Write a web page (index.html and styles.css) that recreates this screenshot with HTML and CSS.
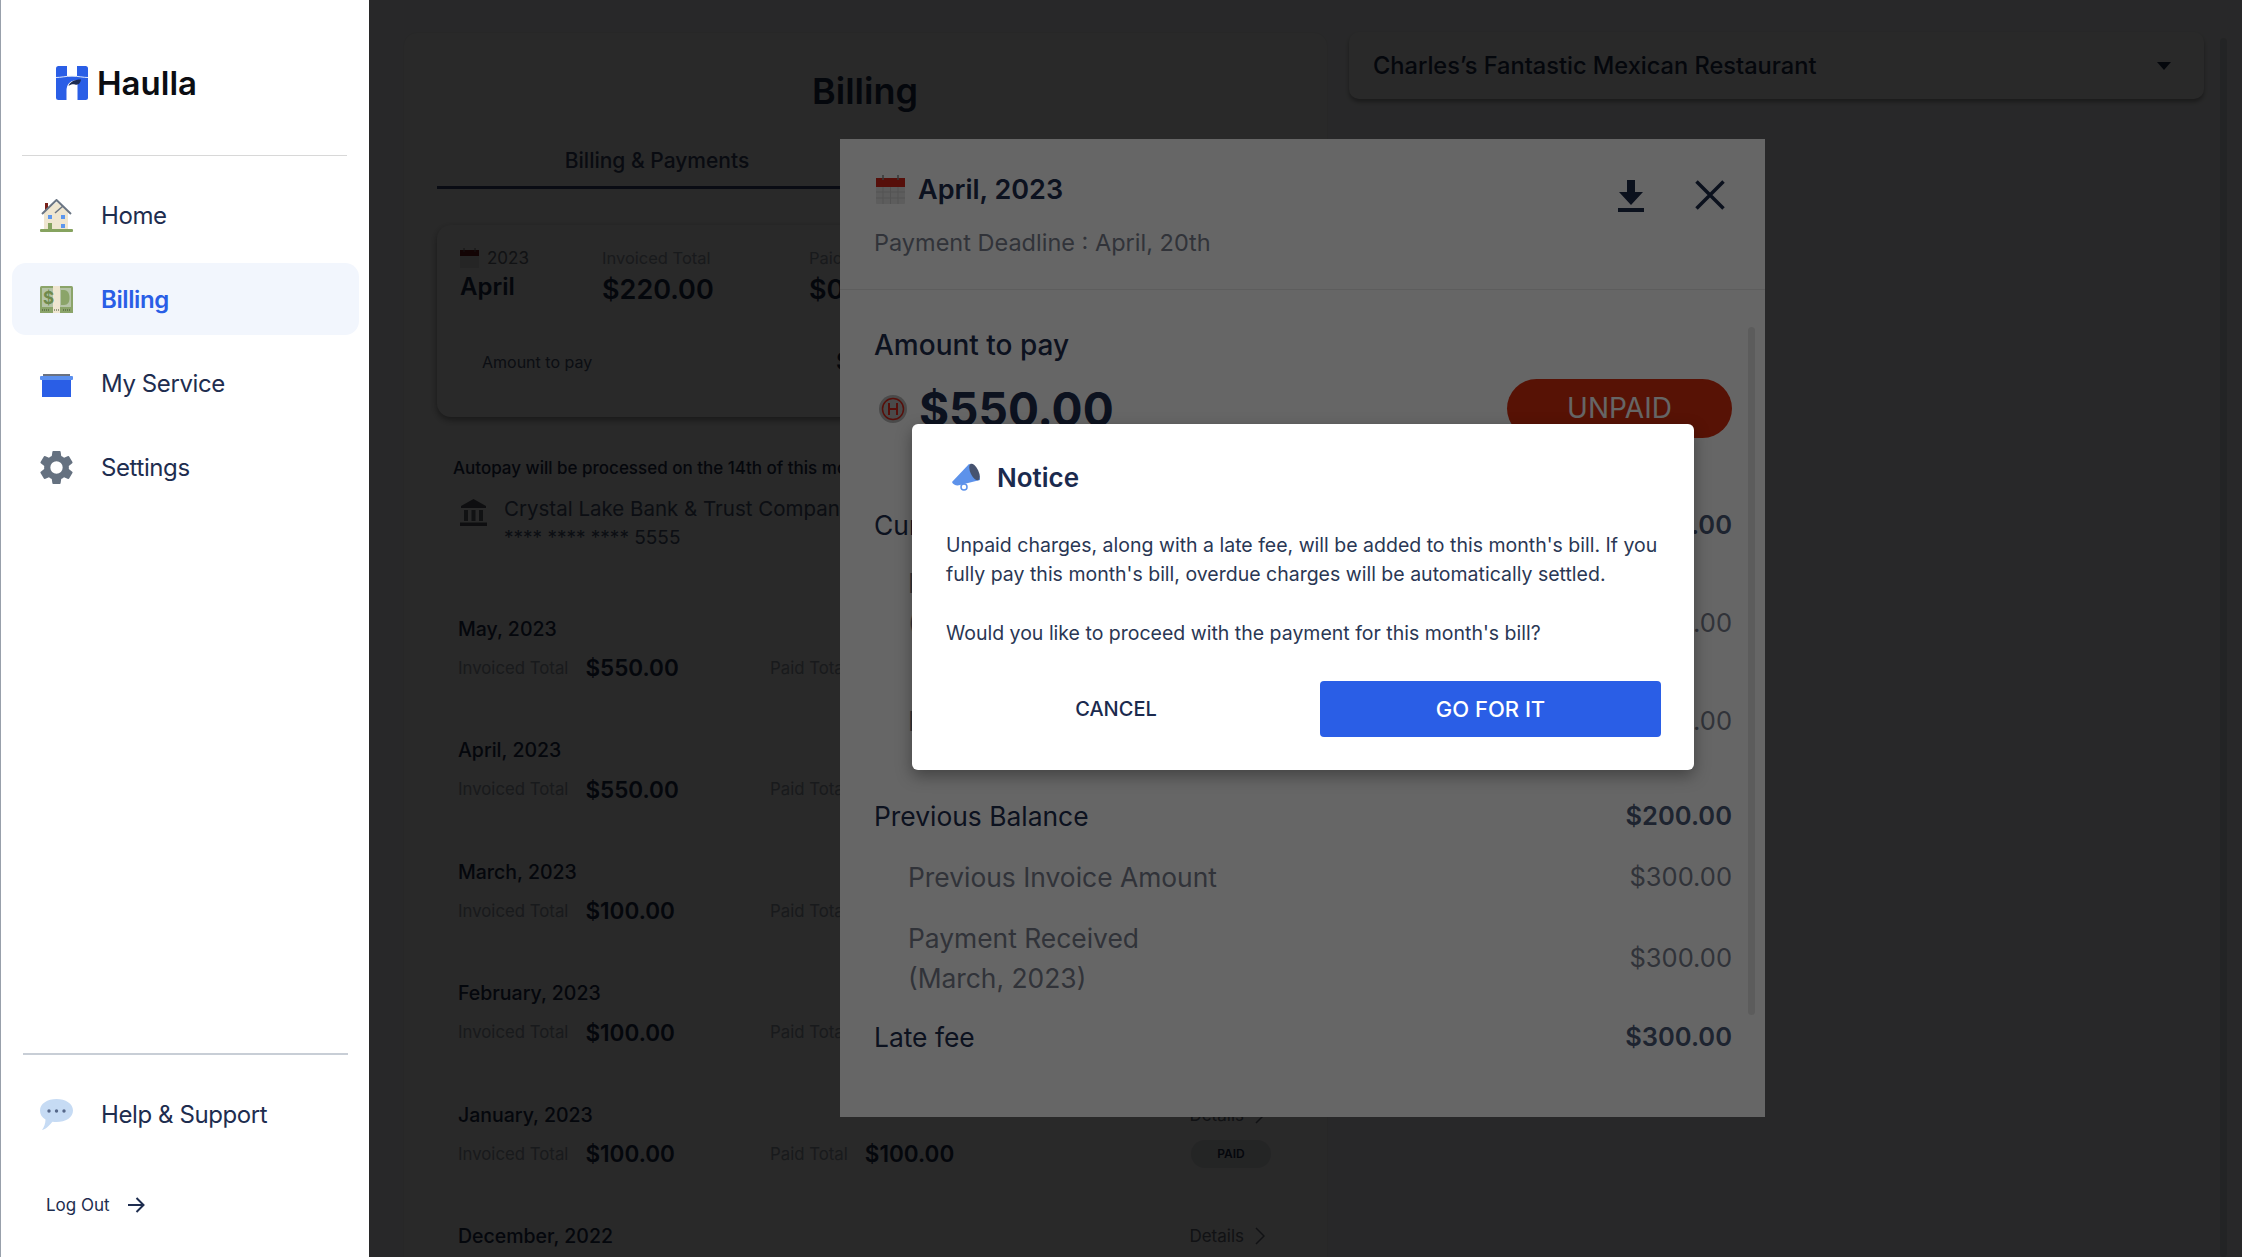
FILE: index.html
```html
<!DOCTYPE html>
<html lang="en">
<head>
<meta charset="utf-8">
<title>Haulla Billing</title>
<link rel="stylesheet" href="styles.css">
</head>
<body>
<div class="app">
  <aside class="sidebar">
    <div class="brand">
      <svg class="brand-mark" viewBox="0 0 32 34"><rect width="32" height="34" rx="2.5" fill="#2a5ee6"/><rect x="11" y="-1" width="10" height="11" fill="#fff"/><path d="M0 11.5C5 11.5 9 10.2 16 10.2S27 11.5 32 11.5" fill="none" stroke="#dfe8fb" stroke-width="1"/><path d="M10.5 35V24C10.5 19 14 14.5 19 14.5C20.5 14.5 21.500 15 21.500 16V35Z" fill="#fff"/><path d="M12.500 20C14 16 18 13.500 25 13.500C24.500 17 22.500 19.500 19 18.500C16.500 18 14.500 18.500 12.500 20Z" fill="#1c2b52"/></svg>
      <span class="brand-name">Haulla</span>
    </div>
    <hr class="rule rule-top">
    <nav class="nav">
      <a class="nav-item">
        <svg class="nav-icon" viewBox="0 0 33 33"><rect x="5" y="4" width="3" height="8" fill="#7a2018"/><path d="M4 13 17 3 28 13V31H4Z" fill="#efe6d0"/><path d="M2 15 16.500 1 31 15" fill="none" stroke="#6b7684" stroke-width="2"/><path d="M15 14 23 7" fill="none" stroke="#6b7684" stroke-width="1.500"/><rect x="8" y="16" width="4" height="4" fill="#5d97ee"/><rect x="21" y="16" width="4" height="4" fill="#5d97ee"/><rect x="21" y="25" width="4" height="4" fill="#5d97ee"/><rect x="8" y="24" width="4" height="7" fill="#86a35f"/><rect y="30" width="33" height="3" rx="1" fill="#86a35f"/></svg>
        <span>Home</span>
      </a>
      <a class="nav-item is-active">
        <svg class="nav-icon" viewBox="0 -3 33 33"><rect y="0" width="33" height="27" rx="1.500" fill="#8ba469"/><rect x="2" y="2" width="29" height="19" fill="#b6c4a7"/><rect y="21" width="33" height="6" fill="#8ba469"/><path d="M21 4H24C28 4 29.500 8 29.500 12S28 19 24 19H21Z" fill="#8ba469"/><rect x="13" y="0" width="7" height="27" fill="#efe6d0"/><text class="nav-dollar" x="3" y="18">$</text><path d="M2 24H10M23 24H31M14 24H19" stroke="#3f4c33" stroke-width="1" stroke-dasharray="1 1"/></svg>
        <span>Billing</span>
      </a>
      <a class="nav-item">
        <svg class="nav-icon" viewBox="0 -7 33 33"><rect x="3" y="0" width="27" height="3" fill="#6b7280"/><rect y="2" width="33" height="4" rx="1" fill="#5b8fee"/><rect x="2" y="6" width="29" height="17" fill="#2a5ee6"/></svg>
        <span>My Service</span>
      </a>
      <a class="nav-item">
        <svg class="nav-icon" viewBox="2.400 2.400 19.200 19.200"><path fill="#657180" d="M19.140 12.940c.040-.300.060-.610.060-.940s-.020-.640-.070-.940l2.030-1.580a.49.49 0 0 0 .120-.610l-1.920-3.320a.49.49 0 0 0-.590-.220l-2.390.960a7 7 0 0 0-1.620-.940l-.360-2.540a.48.480 0 0 0-.480-.410h-3.840a.47.470 0 0 0-.470.410l-.360 2.540c-.590.240-1.130.570-1.620.940l-2.390-.960a.49.49 0 0 0-.590.220L2.740 8.870a.47.470 0 0 0 .120.610l2.030 1.580c-.050.300-.090.630-.090.940s.020.640.070.940l-2.030 1.580a.49.49 0 0 0-.120.610l1.920 3.320c.120.220.370.290.590.220l2.390-.960c.500.380 1.030.700 1.620.940l.360 2.540c.050.240.240.410.480.410h3.840c.240 0 .440-.170.470-.410l.360-2.540c.590-.240 1.130-.560 1.620-.940l2.390.960c.220.080.470 0 .590-.220l1.920-3.320a.47.470 0 0 0-.120-.610zM12 15.600a3.600 3.600 0 1 1 0-7.200 3.600 3.600 0 0 1 0 7.200z"/></svg>
        <span>Settings</span>
      </a>
    </nav>
    <div class="side-foot">
      <hr class="rule rule-bottom">
      <a class="nav-item help">
        <svg class="nav-icon" viewBox="0 0 33 33"><path d="M16.500 1C25.500 1 33 5.500 33 12.500S25.500 24 16.500 24C15 24 14 24 12.500 23.800C10 26.500 6.500 31 2 32C4 29 5.500 26 5.500 21.500C2 19.500 0 16.500 0 12.500C0 5.500 7.500 1 16.500 1Z" fill="#c6dbf4"/><circle cx="9" cy="13" r="1.700" fill="#56688a"/><circle cx="16.500" cy="13" r="1.700" fill="#56688a"/><circle cx="24" cy="13" r="1.700" fill="#56688a"/></svg>
        <span>Help &amp; Support</span>
      </a>
      <a class="logout">
        <span>Log Out</span>
        <svg class="logout-arrow" viewBox="0 0 18 18"><path d="M1 9H16M9.500 2 16.500 9 9.500 16" fill="none" stroke="#1e2d4f" stroke-width="2"/></svg>
      </a>
    </div>
  </aside>

  <main class="main">
    <section class="panel">
      <h1 class="panel-title">Billing</h1>
      <div class="tabs"><div class="tab">Billing &amp; Payments</div></div>
      <div class="summary">
        <div class="summary-top">
          <div class="sum-period">
            <div class="sum-year">
              <svg class="mini-cal" viewBox="0 0 19 20"><rect y="2" width="19" height="18" fill="#e7e7e7"/><rect y="2" width="19" height="6" fill="#7a1a1a"/><path d="M4 0V4M15 0V4" stroke="#777" stroke-width="1"/></svg>
              <span>2023</span>
            </div>
            <div class="sum-month">April</div>
          </div>
          <div class="sum-col"><div class="sum-label">Invoiced Total</div><div class="sum-value">$220.00</div></div>
          <div class="sum-col"><div class="sum-label">Paid Total</div><div class="sum-value">$0.00</div></div>
        </div>
        <div class="sum-strip"><span class="strip-label">Amount to pay</span><span class="strip-value">$220.00</span></div>
      </div>
      <div class="autopay">
        <div class="autopay-note">Autopay will be processed on the 14th of this month</div>
        <div class="bank">
          <svg class="bank-icon" viewBox="0 0 27 27"><path d="M13.500 0 26 7V9H1V7Z" fill="#5a5e66"/><path d="M4 11H8V22H4ZM11.500 11H15.500V22H11.500ZM19 11H23V22H19Z" fill="#6b7079"/><rect y="23.500" width="27" height="3.500" fill="#5a5e66"/></svg>
          <div class="bank-text"><div class="bank-name">Crystal Lake Bank &amp; Trust Company</div><div class="bank-num">**** **** **** 5555</div></div>
        </div>
      </div>
      <article class="bill"><div class="bill-head"><span class="bill-title">May, 2023</span><span class="details">Details<svg class="chev" viewBox="0 0 10 18"><path d="M1 1 9 9 1 17" fill="none" stroke="#6b7280" stroke-width="1.500"/></svg></span></div><div class="bill-line"><div class="bill-cell"><span class="bill-label">Invoiced Total</span><span class="bill-amt">$550.00</span></div><div class="bill-cell"><span class="bill-label">Paid Total</span><span class="bill-amt">$0.00</span></div></div></article>
      <article class="bill"><div class="bill-head"><span class="bill-title">April, 2023</span><span class="details">Details<svg class="chev" viewBox="0 0 10 18"><path d="M1 1 9 9 1 17" fill="none" stroke="#6b7280" stroke-width="1.500"/></svg></span></div><div class="bill-line"><div class="bill-cell"><span class="bill-label">Invoiced Total</span><span class="bill-amt">$550.00</span></div><div class="bill-cell"><span class="bill-label">Paid Total</span><span class="bill-amt">$0.00</span></div></div></article>
      <article class="bill"><div class="bill-head"><span class="bill-title">March, 2023</span><span class="details">Details<svg class="chev" viewBox="0 0 10 18"><path d="M1 1 9 9 1 17" fill="none" stroke="#6b7280" stroke-width="1.500"/></svg></span></div><div class="bill-line"><div class="bill-cell"><span class="bill-label">Invoiced Total</span><span class="bill-amt">$100.00</span></div><div class="bill-cell"><span class="bill-label">Paid Total</span><span class="bill-amt">$100.00</span></div><span class="paid">PAID</span></div></article>
      <article class="bill"><div class="bill-head"><span class="bill-title">February, 2023</span><span class="details">Details<svg class="chev" viewBox="0 0 10 18"><path d="M1 1 9 9 1 17" fill="none" stroke="#6b7280" stroke-width="1.500"/></svg></span></div><div class="bill-line"><div class="bill-cell"><span class="bill-label">Invoiced Total</span><span class="bill-amt">$100.00</span></div><div class="bill-cell"><span class="bill-label">Paid Total</span><span class="bill-amt">$100.00</span></div><span class="paid">PAID</span></div></article>
      <article class="bill"><div class="bill-head"><span class="bill-title">January, 2023</span><span class="details">Details<svg class="chev" viewBox="0 0 10 18"><path d="M1 1 9 9 1 17" fill="none" stroke="#6b7280" stroke-width="1.500"/></svg></span></div><div class="bill-line"><div class="bill-cell"><span class="bill-label">Invoiced Total</span><span class="bill-amt">$100.00</span></div><div class="bill-cell"><span class="bill-label">Paid Total</span><span class="bill-amt">$100.00</span></div><span class="paid">PAID</span></div></article>
      <article class="bill"><div class="bill-head"><span class="bill-title">December, 2022</span><span class="details">Details<svg class="chev" viewBox="0 0 10 18"><path d="M1 1 9 9 1 17" fill="none" stroke="#6b7280" stroke-width="1.500"/></svg></span></div></article>
    </section>
    <section class="side-col">
      <div class="picker"><span>Charles’s Fantastic Mexican Restaurant</span><i class="caret"></i></div>
    </section>
    <div class="page-scroll"></div>
  </main>

  <div class="scrim"></div>
  <section class="detail">
    <header class="detail-head">
      <div class="detail-heading">
        <div class="detail-title">
          <svg class="cal" viewBox="0 0 29 29"><rect y="3" width="29" height="26" rx="1" fill="#e9e9e9"/><rect y="3" width="29" height="9" fill="#d8261a"/><path d="M7 0V5M22 0V5" stroke="#8a8a8a" stroke-width="1.500"/><path d="M0 17H29M0 23H29M7 12V29M14.500 12V29M22 12V29" stroke="#cfcfcf" stroke-width="1"/></svg>
          <span>April, 2023</span>
        </div>
        <div class="detail-sub">Payment Deadline : April, 20th</div>
      </div>
      <div class="detail-actions">
        <svg class="act-dl" viewBox="0 0 26 32"><path d="M9 0H17V12H25L13 25 1 12H9Z" fill="#1c2b4a"/><rect y="28" width="26" height="4" fill="#1c2b4a"/></svg>
        <svg class="act-x" viewBox="0 0 30 30"><path d="M1.500 1.500 28.500 28.500M28.500 1.500 1.500 28.500" stroke="#1c2b4a" stroke-width="3.500" fill="none"/></svg>
      </div>
    </header>
    <div class="detail-body">
      <div class="due-label">Amount to pay</div>
      <div class="due-row">
        <div class="due-amt">
          <svg class="coin" viewBox="0 0 28 28"><circle cx="14" cy="14" r="14" fill="#b9b9b9"/><circle cx="14" cy="14" r="10.500" fill="none" stroke="#d8261a" stroke-width="1.500"/><path d="M10 8V20M18 8V20M10 14H18" stroke="#d8261a" stroke-width="2" fill="none"/></svg>
          <span>$550.00</span>
        </div>
        <span class="unpaid">UNPAID</span>
      </div>
      <div class="line strong l-current"><span>Current Charges</span><span>$250.00</span></div>
      <div class="line sub l-a"><span>Invoice Amount<br>(April, 2023)</span><span class="val-end">$250.00</span></div>
      <div class="line sub l-b"><span>Interest</span><span>$0.00</span></div>
      <div class="line strong l-prev"><span>Previous Balance</span><span>$200.00</span></div>
      <div class="line sub l-c"><span>Previous Invoice Amount</span><span>$300.00</span></div>
      <div class="line sub l-d"><span>Payment Received<br>(March, 2023)</span><span>$300.00</span></div>
      <div class="line strong l-e"><span>Late fee</span><span>$300.00</span></div>
    </div>
    <div class="detail-scroll"></div>
  </section>

  <div class="scrim"></div>
  <section class="notice">
    <div class="notice-head">
      <svg class="horn" viewBox="0 0 30 28"><path d="M1 19 18 1C23 1 29 10 29 17L9 22C6 23 2 22 1 19Z" fill="#5d92ea"/><ellipse cx="23.500" cy="9" rx="4" ry="9" transform="rotate(-25 23.500 9)" fill="#46536f"/><circle cx="13" cy="24" r="3" fill="none" stroke="#5d92ea" stroke-width="1.500"/></svg>
      <h2>Notice</h2>
    </div>
    <p class="notice-text">Unpaid charges, along with a late fee, will be added to this month's bill. If you fully pay this month's bill, overdue charges will be automatically settled.</p>
    <p class="notice-text notice-q">Would you like to proceed with the payment for this month's bill?</p>
    <div class="notice-actions">
      <button class="btn-cancel">CANCEL</button>
      <button class="btn-go">GO FOR IT</button>
    </div>
  </section>
</div>
</body>
</html>
```
FILE: styles.css
```css
* { box-sizing: border-box; }
html, body { margin: 0; height: 100%; }
body { font-family: Inter, "Liberation Sans", sans-serif; color: #1e2d4f; background: #f8fafc; overflow: hidden; }
.app { position: relative; display: flex; width: 2242px; height: 1257px; overflow: hidden; }

/* sidebar */
.sidebar { position: relative; z-index: 10; flex: 0 0 369px; display: flex; flex-direction: column; background: #fff; border-left: 1px solid #98a0ab; padding: 0 10px 0 11px; }
.brand { display: flex; align-items: center; gap: 9px; height: 34px; margin: 66px 0 0 44px; }
.brand-mark { width: 32px; height: 34px; }
.brand-name { font-size: 33px; font-weight: 600; color: #0b0d12; }
.rule { border: 0; margin: 0; }
.rule-top { height: 1px; background: #d8d8d8; margin: 55px 12px 0 10px; }
.nav { display: flex; flex-direction: column; gap: 12px; margin-top: 23px; }
.nav-item { display: flex; align-items: center; gap: 28px; height: 72px; padding-left: 28px; border-radius: 14px; font-size: 24px; letter-spacing: -0.4px; color: #1e2d4f; }
.nav-item.is-active { background: #f2f6fd; color: #2a5ee6; font-weight: 600; }
.nav-icon { width: 33px; height: 33px; flex: none; }
.nav-dollar { font: 700 17px Inter, sans-serif; fill: #6f8a4c; }
.side-foot { margin-top: auto; }
.rule-bottom { height: 2px; background: #c8ced6; margin: 0 11px 0 11px; }
.help { margin-top: 23px; }
.logout { display: flex; align-items: center; gap: 17px; height: 24px; margin: 43px 0 40px 34px; font-size: 17px; color: #1e2d4f; }
.logout-arrow { width: 18px; height: 18px; }

/* main page */
.main { position: relative; flex: 1; display: flex; gap: 21px; padding: 32px 0 0 34px; background: #fbfcff; }
.panel { flex: 0 0 925px; height: 1300px; padding: 35px 36px 0 33px; background: #fff; border-radius: 14px; border: 1px solid #f4f5f7; }
.panel-title { margin: 0; font-size: 36px; line-height: 46px; font-weight: 600; text-align: center; color: #1e2d4f; padding-left: 2px; }
.tabs { display: flex; height: 75px; }
.tab { width: 440px; height: 75px; padding-top: 35px; border-bottom: 3px solid #3a4a78; font-size: 21px; line-height: 24px; font-weight: 500; text-align: center; color: #3a4a6b; }
.summary { height: 192px; margin-top: 36px; padding: 22px 23px 0; border-radius: 14px; background: #fff; box-shadow: 0 3px 6px rgba(0,0,0,.4); }
.summary-top { display: flex; }
.sum-period { width: 142px; }
.sum-year { display: flex; align-items: center; gap: 8px; height: 22px; font-size: 17px; color: #6b7280; }
.mini-cal { width: 19px; height: 20px; }
.sum-month { margin-top: -2px; font-size: 24px; line-height: 40px; font-weight: 600; color: #1e2d4f; }
.sum-col { width: 207px; }
.sum-label { font-size: 16.5px; line-height: 22px; color: #9ca3af; }
.sum-value { margin-top: 1px; font-size: 27px; line-height: 40px; font-weight: 600; color: #1e2d4f; }
.sum-strip { display: flex; align-items: center; height: 59px; margin-top: 22px; padding-left: 22px; }
.strip-label { width: 354px; font-size: 16px; color: #4b5a78; }
.strip-value { font-size: 24px; font-weight: 600; }
.autopay { height: 137px; margin-top: 17px; padding: 23px 16px 0; }
.autopay-note { font-size: 17px; line-height: 22px; font-weight: 500; color: #1e2d4f; }
.bank { display: flex; gap: 17px; margin: 15px 0 0 7px; }
.bank-icon { width: 27px; height: 27px; margin-top: 5px; }
.bank-name { font-size: 20.500px; line-height: 29px; color: #4b5a78; }
.bank-num { font-size: 19px; line-height: 29px; color: #4b5a78; }
.bill { height: 121.6px; padding: 28px 26px 0 21px; }
.autopay + .bill { margin-top: 17.5px; }
.bill-head { display: flex; justify-content: space-between; align-items: center; height: 24px; }
.bill-title { font-size: 19.500px; font-weight: 500; color: #1e2d4f; }
.details { display: flex; align-items: center; gap: 11px; font-size: 17px; color: #6b7280; }
.chev { width: 10px; height: 18px; }
.bill-line { position: relative; display: flex; align-items: center; height: 24px; margin-top: 15px; }
.bill-cell { display: flex; align-items: center; gap: 17px; width: 312px; }
.bill-label { font-size: 16.800px; color: #9ca3af; }
.bill-amt { font-size: 22.500px; font-weight: 600; color: #1e2d4f; }
.paid { margin-left: auto; margin-right: -6px; width: 80px; height: 28px; border-radius: 14px; background: #e2e5ea; font-size: 12px; line-height: 28px; font-weight: 600; text-align: center; color: #1e2d4f; }
.side-col { flex: 0 0 855px; }
.picker { display: flex; justify-content: space-between; align-items: center; height: 67px; padding: 0 33px 0 24px; border-radius: 10px; background: #fff; box-shadow: 0 3px 4px rgba(0,0,0,.35); font-size: 23.600px; font-weight: 500; color: #1e2d4f; }
.caret { width: 0; height: 0; border: 7px solid transparent; border-top: 8px solid #1e2d4f; border-bottom: 0; }
.page-scroll { position: absolute; left: 1851px; top: 38px; bottom: 0; width: 7px; border-radius: 4px; background: #dfe1e6; }

/* layers */
.scrim { position: absolute; inset: 0; background: rgba(0,0,0,.6); }
.detail { position: absolute; left: 840px; top: 139px; width: 925px; height: 978px; background: #fff; overflow: hidden; }
.detail-head { display: flex; justify-content: space-between; height: 151px; border-bottom: 1px solid #e9e9e9; padding: 33px 40px 0 34px; }
.detail-title { display: flex; align-items: center; gap: 13px; height: 34px; margin-left: 2px; font-size: 27px; font-weight: 600; color: #1e2d4f; }
.cal { width: 29px; height: 29px; }
.detail-sub { margin-top: 20px; font-size: 23.500px; line-height: 34px; color: #7a8190; }
.detail-actions { display: flex; gap: 51px; padding-top: 8px; }
.act-dl { width: 26px; height: 32px; }
.act-x { width: 30px; height: 30px; }
.detail-body { padding: 38px 33px 0 34px; }
.due-label { font-size: 28px; line-height: 34px; font-weight: 500; color: #1e2d4f; }
.due-row { display: flex; justify-content: space-between; align-items: center; height: 59px; margin-top: 17px; }
.due-amt { display: flex; align-items: center; gap: 12px; margin-left: 5px; font-size: 46px; font-weight: 700; color: #1e2d4f; }
.coin { width: 28px; height: 28px; }
.unpaid { width: 225px; height: 59px; margin-right: 0; border-radius: 30px; background: #d92d0e; font-size: 28px; line-height: 59px; text-align: center; color: #fff; }
.line { display: flex; justify-content: space-between; align-items: center; font-size: 26.400px; line-height: 40px; }
.line span:last-child { font-size: 25.500px; }
.line span:first-child { font-size: 26.400px; }
.line.strong { line-height: 34px; color: #1e2d4f; }
.line.strong span:last-child { font-weight: 600; color: #4b5a78; }
.line.sub { padding-left: 34px; color: #7a8190; }
.val-end { align-self: flex-end; }
.l-current { margin-top: 70px; }
.l-a { margin-top: 21px; }
.l-b { margin-top: 58px; }
.l-prev { margin-top: 58px; }
.l-c { margin-top: 24px; }
.l-d { margin-top: 21px; }
.l-e { margin-top: 22px; }
.detail-scroll { position: absolute; left: 908px; top: 188px; width: 7px; height: 688px; border-radius: 4px; background: #e6e6e6; }
.notice { position: absolute; left: 912px; top: 424px; width: 782px; height: 346px; padding: 37px 33px 0 34px; background: #fff; border-radius: 6px; box-shadow: 0 6px 16px rgba(0,0,0,.35); }
.notice-head { display: flex; align-items: center; gap: 16px; height: 32px; margin-left: 5px; }
.horn { width: 30px; height: 28px; }
.notice-head h2 { margin: 0; font-size: 26px; font-weight: 600; color: #1b2a4e; }
.notice-text { margin: 0 -12px 0 0; font-size: 19.500px; line-height: 29.3px; color: #2a3754; }
.notice-head + .notice-text { margin-top: 38px; }
.notice-q { margin-top: 29px; }
.notice-actions { display: flex; justify-content: space-between; align-items: center; margin-top: 33px; }
.btn-cancel { width: 340px; height: 56px; border: 0; background: none; font: 500 20px Inter, sans-serif; color: #1b2a4e; }
.btn-go { width: 341px; height: 56px; border: 0; border-radius: 4px; background: #2a5ee6; font: 500 22px Inter, sans-serif; color: #fff; }
```
